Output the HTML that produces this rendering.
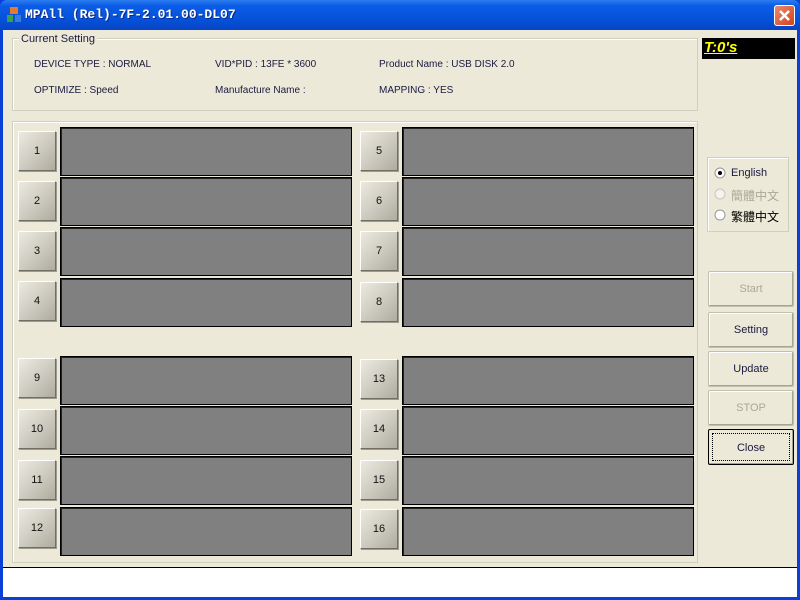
<!DOCTYPE html>
<html><head><meta charset="utf-8"><style>
*{margin:0;padding:0;box-sizing:border-box}
body{width:800px;height:600px;overflow:hidden;background:#0a3fd8;font-family:"Liberation Sans","Noto Sans CJK TC",sans-serif;font-size:10px;color:#000;position:relative}
.title{position:absolute;left:0;top:0;width:800px;height:30px;background:linear-gradient(#2d7df0,#0a5ce6 20%,#0550d8 70%,#0644c2);border-radius:7px 7px 0 0}
.title span{position:absolute;left:25px;top:7px;color:#fff;font:bold 13px "Liberation Mono",monospace;text-shadow:1px 1px #0b2a8a}
.xbtn{position:absolute;left:774px;top:5px;width:21px;height:21px;background:linear-gradient(135deg,#e98a6e,#d2421c);border:1px solid #fff;border-radius:3px}
.client{position:absolute;left:3px;top:30px;width:794px;height:567px;background:#ece9d8}
.a{position:absolute}
.grp{position:absolute;border:1px solid #d0d0bf;box-shadow:inset 1px 1px 0 #fff}
.lbl{position:absolute;white-space:nowrap;color:#1a1a40}
.sb{position:absolute;width:38px;height:40px;background:linear-gradient(135deg,#eceae0,#cfcdc1 50%,#aeac9f);border:1px solid;border-color:#fff #716f64 #716f64 #fff;box-shadow:1px 1px 0 #9d9b8f;text-align:center;line-height:38px;color:#111;font-size:11px}
.gr{position:absolute;width:292px;height:49px;background:#808080;border:1px solid #000;box-shadow:inset 1px 1px 0 #222}
.btn{position:absolute;left:708px;width:86px;height:36px;border:1px solid #c2bfb0;border-radius:2px;background:#ece9d8;box-shadow:inset -1px -1px 0 #a6a393,inset 1px 1px 0 #fff;text-align:center;line-height:34px;color:#1a1a40;font-size:11px}
.dis{color:#aca899}
</style></head><body>
<div class="title"><svg class="a" style="left:6px;top:7px" width="16" height="16"><rect x="4" y="0" width="8" height="7" fill="#e67a2a"/><rect x="1" y="8" width="6" height="7" fill="#3aa04a"/><rect x="9" y="8" width="6" height="7" fill="#3a7ad8"/></svg><span>MPAll (Rel)-7F-2.01.00-DL07</span><div class="xbtn"><svg width="19" height="19"><path d="M5 5L14 14M14 5L5 14" stroke="#fff" stroke-width="2.5"/></svg></div></div>
<div class="client"></div>
<div class="grp" style="left:12px;top:38px;width:686px;height:73px"></div>
<div class="lbl" style="left:19px;top:33px;background:#ece9d8;padding:0 2px;font-size:11px">Current Setting</div>
<div class="lbl" style="left:34px;top:59px">DEVICE TYPE : NORMAL</div>
<div class="lbl" style="left:215px;top:59px">VID*PID : 13FE * 3600</div>
<div class="lbl" style="left:379px;top:59px">Product Name : USB DISK 2.0</div>
<div class="lbl" style="left:34px;top:85px">OPTIMIZE : Speed</div>
<div class="lbl" style="left:215px;top:85px">Manufacture Name :</div>
<div class="lbl" style="left:379px;top:85px">MAPPING : YES</div>
<div class="a" style="left:702px;top:38px;width:93px;height:21px;background:#000"><span style="position:absolute;left:2px;top:1px;color:#ff0;font:italic bold 15px 'Liberation Sans',sans-serif;text-decoration:underline">T:0's</span></div>
<div class="grp" style="left:12px;top:121px;width:686px;height:442px"></div>
<div class="sb" style="left:18px;top:131px">1</div><div class="gr" style="left:60px;top:127px"></div>
<div class="sb" style="left:18px;top:181px">2</div><div class="gr" style="left:60px;top:177px"></div>
<div class="sb" style="left:18px;top:231px">3</div><div class="gr" style="left:60px;top:227px"></div>
<div class="sb" style="left:18px;top:281px">4</div><div class="gr" style="left:60px;top:278px"></div>
<div class="sb" style="left:360px;top:131px">5</div><div class="gr" style="left:402px;top:127px"></div>
<div class="sb" style="left:360px;top:181px">6</div><div class="gr" style="left:402px;top:177px"></div>
<div class="sb" style="left:360px;top:231px">7</div><div class="gr" style="left:402px;top:227px"></div>
<div class="sb" style="left:360px;top:282px">8</div><div class="gr" style="left:402px;top:278px"></div>
<div class="sb" style="left:18px;top:358px">9</div><div class="gr" style="left:60px;top:356px"></div>
<div class="sb" style="left:18px;top:409px">10</div><div class="gr" style="left:60px;top:406px"></div>
<div class="sb" style="left:18px;top:460px">11</div><div class="gr" style="left:60px;top:456px"></div>
<div class="sb" style="left:18px;top:508px">12</div><div class="gr" style="left:60px;top:507px"></div>
<div class="sb" style="left:360px;top:359px">13</div><div class="gr" style="left:402px;top:356px"></div>
<div class="sb" style="left:360px;top:409px">14</div><div class="gr" style="left:402px;top:406px"></div>
<div class="sb" style="left:360px;top:460px">15</div><div class="gr" style="left:402px;top:456px"></div>
<div class="sb" style="left:360px;top:509px">16</div><div class="gr" style="left:402px;top:507px"></div>
<div class="grp" style="left:707px;top:157px;width:82px;height:75px"></div>
<svg class="a" style="left:714px;top:167px" width="14" height="60"><circle cx="6" cy="6" r="5" fill="#fff" stroke="#999"/><circle cx="6" cy="6" r="2" fill="#000"/><circle cx="6" cy="27" r="5" fill="#f4f3ee" stroke="#c8c6bc"/><circle cx="6" cy="48" r="5" fill="#fff" stroke="#999"/></svg>
<div class="lbl" style="left:731px;top:167px;font-size:11px">English</div>
<div class="lbl dis" style="left:731px;top:187px;font-size:12px">簡體中文</div>
<div class="lbl" style="left:731px;top:208px;font-size:12px;color:#000">繁體中文</div>
<div class="btn dis" style="top:271px">Start</div>
<div class="btn" style="top:312px">Setting</div>
<div class="btn" style="top:351px">Update</div>
<div class="btn dis" style="top:390px">STOP</div>
<div class="btn" style="top:429px;border:1px solid #000;box-shadow:inset -1px -1px 0 #a6a393"><div style="position:absolute;left:3px;top:3px;right:3px;bottom:3px;border:1px dotted #000;line-height:28px">Close</div></div>
<div class="a" style="left:3px;top:567px;width:794px;height:30px;background:#fff;border-top:1px solid #000"></div>
</body></html>
